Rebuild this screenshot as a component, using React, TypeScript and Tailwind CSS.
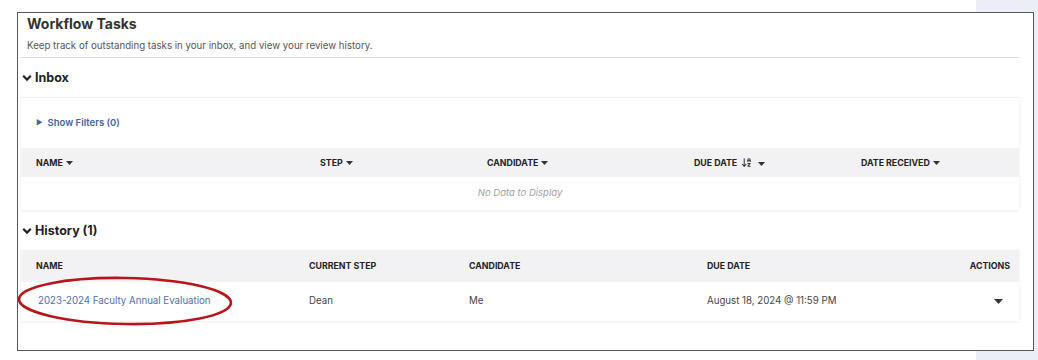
import React from "react";
import { ArrowDownAZ } from "lucide-react";

const Caret = () => (
  <svg width="7" height="4" viewBox="0 0 7 4" className="ml-[3px] inline-block">
    <path d="M0 0 L7 0 L3.5 4 Z" fill="#333" />
  </svg>
);

const Chevron = () => (
  <svg width="10" height="8" viewBox="0 0 10 8" className="mr-[3px]">
    <path d="M1.2 1.8 L5 5.6 L8.8 1.8" fill="none" stroke="#222" strokeWidth="2.2" />
  </svg>
);

export default function App() {
  const font = { fontFamily: "Inter, 'Noto Sans', sans-serif" };
  return (
    <div
      className="w-[1038px] h-[360px] bg-[linear-gradient(to_right,#ffffff_976px,#eceef5_976px)] pt-[12px] pl-[17px]"
      style={font}
    >
      <div className="relative w-[1017px] h-[339px] border-[1.5px] border-[#585858] bg-white pl-[3px] pr-[14px]">
        {/* Title */}
        <div className="px-[6px] pt-[1px]">
          <h1 className="text-[14px] leading-[20px] font-bold text-[#333]">Workflow Tasks</h1>
          <p className="mt-[5px] text-[9.7px] leading-[14px] text-[#555]">
            Keep track of outstanding tasks in your inbox, and view your review history.
          </p>
        </div>
        <div className="mt-[4px] h-px bg-[#dcdcdc]" />

        {/* Inbox */}
        <div className="flex items-center pl-[1px] pt-[10px] h-[30px]">
          <Chevron />
          <span className="text-[12.5px] font-bold text-[#222]">Inbox</span>
        </div>
        <div className="mt-[9px] bg-white shadow-[0_1px_3px_rgba(0,0,0,0.08)] border-t border-[#f0f0f0]">
          <div className="h-[50px] flex items-center pl-[15px] text-[9.5px] font-semibold text-[#44639c]">
            <span className="text-[7px] mr-[5px]">▶</span>
            Show Filters (0)
          </div>
          <div className="grid grid-cols-[284px_167px_207px_167px_1fr] items-center h-[29px] bg-[#f2f2f4] pl-[15px] text-[8.8px] font-bold text-[#222]">
            <div className="flex items-center">NAME<Caret /></div>
            <div className="flex items-center">STEP<Caret /></div>
            <div className="flex items-center">CANDIDATE<Caret /></div>
            <div className="flex items-center">
              DUE DATE
              <ArrowDownAZ size={11} strokeWidth={2.2} className="ml-[4px] text-[#333]" />
              <span className="ml-[3px]"><Caret /></span>
            </div>
            <div className="flex items-center">DATE RECEIVED<Caret /></div>
          </div>
          <div className="h-[33px] flex items-center justify-center text-[9.5px] italic text-[#a0a0a0]">
            No Data to Display
          </div>
        </div>

        {/* History */}
        <div className="flex items-center pl-[1px] pt-[12px] h-[30px]">
          <Chevron />
          <span className="text-[12.5px] font-bold text-[#222]">History (1)</span>
        </div>
        <div className="mt-[10px] bg-white shadow-[0_1px_3px_rgba(0,0,0,0.08)]">
          <div className="grid grid-cols-[273px_160px_238px_1fr_auto] items-center h-[32px] bg-[#f2f2f4] pl-[15px] pr-[9px] text-[8.8px] font-bold text-[#222]">
            <div>NAME</div>
            <div>CURRENT STEP</div>
            <div>CANDIDATE</div>
            <div>DUE DATE</div>
            <div>ACTIONS</div>
          </div>
          <div className="grid grid-cols-[273px_160px_238px_1fr_auto] items-center h-[39px] pl-[15px] pr-[9px] text-[9.7px] text-[#444]">
            <div className="pl-[2px] text-[#5070a8]">2023-2024 Faculty Annual Evaluation</div>
            <div>Dean</div>
            <div>Me</div>
            <div>August 18, 2024 @ 11:59 PM</div>
            <div className="w-[28px] flex justify-end pr-[7px]">
              <svg width="9" height="5" viewBox="0 0 9 5">
                <path d="M0 0 L9 0 L4.5 5 Z" fill="#333" />
              </svg>
            </div>
          </div>
        </div>

        {/* annotation ellipse */}
        <svg
          className="absolute left-[-2px] top-[262px] pointer-events-none"
          width="220"
          height="54"
          viewBox="0 0 220 54"
        >
          <ellipse cx="109" cy="26" rx="106" ry="23" fill="none" stroke="#b8141a" strokeWidth="2.6" transform="rotate(1 109 26)" />
        </svg>
      </div>
    </div>
  );
}
